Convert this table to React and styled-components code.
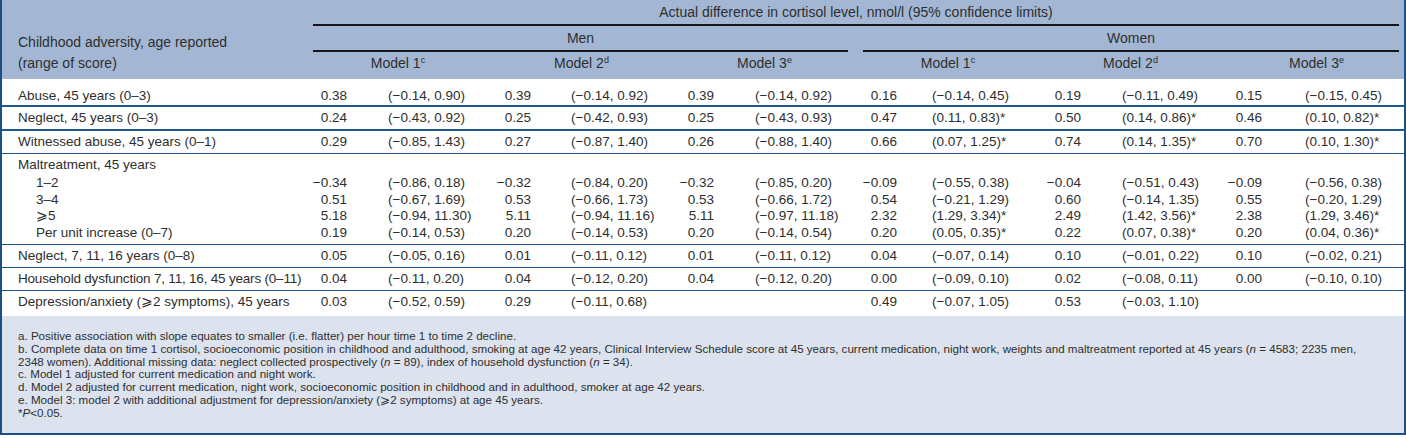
import styled, { createGlobalStyle } from 'styled-components';

const Global = createGlobalStyle`
html, body {
  margin: 0;
  padding: 0;
  background: #ffffff;
}
body {
  font-family: "Liberation Sans", Arial, sans-serif;
  color: #2e2e2e;
}
`;

const widths = [296, 50, 134, 50, 133, 50, 133, 50, 134, 50, 131, 50, 141];
const ciPad = [40, 39, 40, 34, 40, 42];

const rows = [
  { label: 'Abuse, 45 years (0–3)', first: true, cells: [
    ['0.38', '(−0.14, 0.90)'], ['0.39', '(−0.14, 0.92)'], ['0.39', '(−0.14, 0.92)'],
    ['0.16', '(−0.14, 0.45)'], ['0.19', '(−0.11, 0.49)'], ['0.15', '(−0.15, 0.45)']] },
  { label: 'Neglect, 45 years (0–3)', rule: 2, cells: [
    ['0.24', '(−0.43, 0.92)'], ['0.25', '(−0.42, 0.93)'], ['0.25', '(−0.43, 0.93)'],
    ['0.47', '(0.11, 0.83)*'], ['0.50', '(0.14, 0.86)*'], ['0.46', '(0.10, 0.82)*']] },
  { label: 'Witnessed abuse, 45 years (0–1)', rule: 2, cells: [
    ['0.29', '(−0.85, 1.43)'], ['0.27', '(−0.87, 1.40)'], ['0.26', '(−0.88, 1.40)'],
    ['0.66', '(0.07, 1.25)*'], ['0.74', '(0.14, 1.35)*'], ['0.70', '(0.10, 1.30)*']] },
  { label: 'Maltreatment, 45 years', rule: 1, part: 'top', cells: [] },
  { label: '1–2', sub: true, part: 'mid', cells: [
    ['−0.34', '(−0.86, 0.18)'], ['−0.32', '(−0.84, 0.20)'], ['−0.32', '(−0.85, 0.20)'],
    ['−0.09', '(−0.55, 0.38)'], ['−0.04', '(−0.51, 0.43)'], ['−0.09', '(−0.56, 0.38)']] },
  { label: '3–4', sub: true, part: 'mid', cells: [
    ['0.51', '(−0.67, 1.69)'], ['0.53', '(−0.66, 1.73)'], ['0.53', '(−0.66, 1.72)'],
    ['0.54', '(−0.21, 1.29)'], ['0.60', '(−0.14, 1.35)'], ['0.55', '(−0.20, 1.29)']] },
  { label: '⩾5', sub: true, part: 'mid', cells: [
    ['5.18', '(−0.94, 11.30)'], ['5.11', '(−0.94, 11.16)'], ['5.11', '(−0.97, 11.18)'],
    ['2.32', '(1.29, 3.34)*'], ['2.49', '(1.42, 3.56)*'], ['2.38', '(1.29, 3.46)*']] },
  { label: 'Per unit increase (0–7)', sub: true, part: 'end', cells: [
    ['0.19', '(−0.14, 0.53)'], ['0.20', '(−0.14, 0.53)'], ['0.20', '(−0.14, 0.54)'],
    ['0.20', '(0.05, 0.35)*'], ['0.22', '(0.07, 0.38)*'], ['0.20', '(0.04, 0.36)*']] },
  { label: 'Neglect, 7, 11, 16 years (0–8)', rule: 1, cells: [
    ['0.05', '(−0.05, 0.16)'], ['0.01', '(−0.11, 0.12)'], ['0.01', '(−0.11, 0.12)'],
    ['0.04', '(−0.07, 0.14)'], ['0.10', '(−0.01, 0.22)'], ['0.10', '(−0.02, 0.21)']] },
  { label: 'Household dysfunction 7, 11, 16, 45 years (0–11)', rule: 1, tight: true, cells: [
    ['0.04', '(−0.11, 0.20)'], ['0.04', '(−0.12, 0.20)'], ['0.04', '(−0.12, 0.20)'],
    ['0.00', '(−0.09, 0.10)'], ['0.02', '(−0.08, 0.11)'], ['0.00', '(−0.10, 0.10)']] },
  { label: 'Depression/anxiety (⩾2 symptoms), 45 years', rule: 1, last: true, cells: [
    ['0.03', '(−0.52, 0.59)'], ['0.29', '(−0.11, 0.68)'], ['', ''],
    ['0.49', '(−0.07, 1.05)'], ['0.53', '(−0.03, 1.10)'], ['', '']] },
];

const models = [['1', 'c'], ['2', 'd'], ['3', 'e'], ['1', 'c'], ['2', 'd'], ['3', 'e']];

export default function App() {
  return (
    <Frame>
      <Global />
      <Table>
        <colgroup>
          {widths.map((w, i) => <col key={i} style={{ width: w }} />)}
        </colgroup>
        <thead>
          <tr>
            <Corner rowSpan={3}>
              Childhood adversity, age reported<br />(range of score)
            </Corner>
            <GroupHead colSpan={12}>
              <Rule $right={5} $top={4}>Actual difference in cortisol level, nmol/l (95% confidence limits)</Rule>
            </GroupHead>
          </tr>
          <tr>
            <GroupHead colSpan={6}>
              <Rule $right={0} $top={4}>Men</Rule>
            </GroupHead>
            <GroupHead colSpan={6}>
              <Rule $right={5} $top={4}>Women</Rule>
            </GroupHead>
          </tr>
          <tr>
            {models.map(([n, s], i) => (
              <ModelHead key={i} colSpan={2}>Model {n}<sup>{s}</sup></ModelHead>
            ))}
          </tr>
        </thead>
        <tbody>
          {rows.map((r, i) => (
            <Row key={i} $rule={r.rule || 0}>
              <Label $sub={r.sub} $tight={r.tight} $part={r.part} $first={r.first} $last={r.last}>{r.label}</Label>
              {r.cells.length === 0
                ? <Value colSpan={12} $part={r.part} />
                : r.cells.map(([est, ci], j) => [
                    <Value key={j + 'e'} $part={r.part} $first={r.first} $last={r.last}>{est}</Value>,
                    <Interval key={j + 'c'} $pad={ciPad[j]} $part={r.part} $first={r.first} $last={r.last}>{ci}</Interval>,
                  ])}
            </Row>
          ))}
        </tbody>
      </Table>
      <Notes>
        <Note>a. Positive association with slope equates to smaller (i.e. flatter) per hour time 1 to time 2 decline.</Note>
        <Note>b. Complete data on time 1 cortisol, socioeconomic position in childhood and adulthood, smoking at age 42 years, Clinical Interview Schedule score at 45 years, current medication, night work, weights and maltreatment reported at 45 years (<i>n</i> = 4583; 2235 men,</Note>
        <Note>2348 women). Additional missing data: neglect collected prospectively (<i>n</i> = 89), index of household dysfunction (<i>n</i> = 34).</Note>
        <Note>c. Model 1 adjusted for current medication and night work.</Note>
        <Note>d. Model 2 adjusted for current medication, night work, socioeconomic position in childhood and in adulthood, smoker at age 42 years.</Note>
        <Note>e. Model 3: model 2 with additional adjustment for depression/anxiety (⩾2 symptoms) at age 45 years.</Note>
        <Note>*<i>P</i>&lt;0.05.</Note>
      </Notes>
    </Frame>
  );
}

const cellPad = (p) => {
  if (p.$part === 'top') return 'padding-top: 2px; padding-bottom: 2px;';
  if (p.$part === 'mid') return 'padding-top: 0; padding-bottom: 0; line-height: 16.5px;';
  if (p.$part === 'end') return 'padding-top: 0; padding-bottom: 3px; line-height: 16.5px;';
  if (p.$first) return 'padding-top: 8px; padding-bottom: 1px;';
  if (p.$last) return 'padding-top: 2px; padding-bottom: 6px;';
  return 'padding-top: 2px; padding-bottom: 3px;';
};

const Frame = styled.div`
width: 1402px;
border: 2px solid #1c4f84;
border-top: none;
background: #ffffff;
`;

const Table = styled.table`
width: 1402px;
table-layout: fixed;
border-collapse: collapse;
font-size: 13.5px;
line-height: 17px;
color: #2e2e2e;

th{
  font-size: 14px;
  font-weight: 400;
  background: #a3b7d4;
}

sup{
  font-size: 9px;
  line-height: 0;
  vertical-align: 5px;
}
`;

const Corner = styled.th`
text-align: left;
vertical-align: bottom;
line-height: 21px;
padding: 0 0 5px 16px;
`;

const GroupHead = styled.th`
padding: 0;
`;

const Rule = styled.div`
margin: 0 ${(p) => p.$right}px 0 15px;
padding: ${(p) => p.$top}px 0 3px;
border-bottom: 2px solid #161616;
text-align: center;
`;

const ModelHead = styled.th`
text-align: center;
padding: 3px 0 7px 16px;
`;

const Row = styled.tr`
border-top: ${(p) => p.$rule}px solid #1d5890;
`;

const Label = styled.td`
padding-left: ${(p) => (p.$sub ? 34 : 16)}px;
letter-spacing: ${(p) => (p.$tight ? '-0.2px' : 'normal')};
white-space: nowrap;
${cellPad}
`;

const Value = styled.td`
text-align: right;
white-space: nowrap;
${cellPad}
`;

const Interval = styled.td`
text-align: left;
white-space: nowrap;
padding-left: ${(p) => p.$pad}px;
${cellPad}
`;

const Notes = styled.div`
background: #dce3ee;
padding: 14px 0 13px 16px;
font-size: 11.6px;
line-height: 12.8px;
color: #2e2e2e;
`;

const Note = styled.div`
white-space: nowrap;
`;
